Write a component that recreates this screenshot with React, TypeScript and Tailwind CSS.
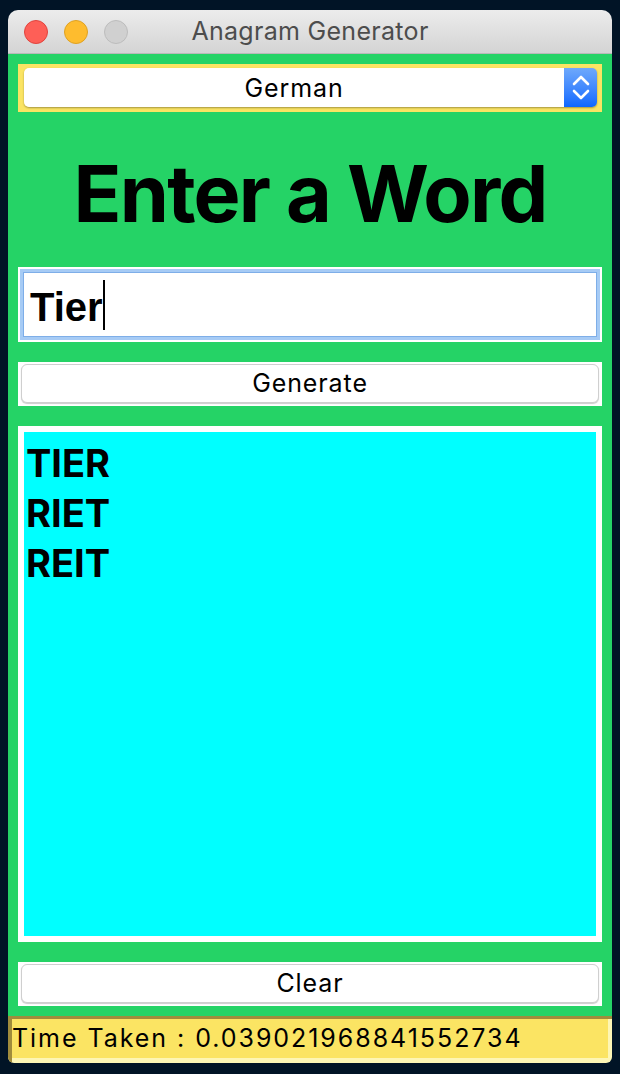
import { ReactNode } from 'react'

const sf = { fontFamily: 'Inter, "Noto Sans", sans-serif' }
const helv = { fontFamily: '"Liberation Sans", Arial, sans-serif' }

function MacButton({ label }: { label: string }) {
  return (
    <div className="h-[44px] bg-white px-[3px] pt-[2px] pb-[3px]">
      <div
        className="flex h-full items-center justify-center rounded-[6px] border border-[#cfcfcf] bg-white text-[25px] tracking-[0.9px] text-black shadow-[0_1px_1px_rgba(0,0,0,0.2)]"
        style={sf}
      >
        {label}
      </div>
    </div>
  )
}

function Light({ color, border }: { color: string; border: string }) {
  return <div className={`h-[24px] w-[24px] rounded-full border ${color} ${border}`} />
}

function Section({ children, className }: { children: ReactNode; className?: string }) {
  return <div className={className}>{children}</div>
}

export default function App() {
  const results = ['TIER', 'RIET', 'REIT']

  return (
    <div className="h-[1074px] w-[620px] bg-[#011426] px-[8px] pt-[10px]">
      <div className="flex h-[1053px] flex-col overflow-hidden rounded-t-[10px] rounded-b-[6px]">
        {/* title bar */}
        <div className="relative flex h-[44px] shrink-0 items-center border-b border-[#b9b9b9] bg-gradient-to-b from-[#ececec] to-[#d4d4d4] pl-[16px]">
          <div className="flex gap-[16px]">
            <Light color="bg-[#fe5f57]" border="border-[#e0443e]" />
            <Light color="bg-[#febc2e]" border="border-[#dea123]" />
            <Light color="bg-[#d0d0d0]" border="border-[#bcbcbc]" />
          </div>
          <div
            className="absolute inset-0 flex items-center justify-center text-[25px] tracking-[0.3px] text-[#4d4d4d]"
            style={sf}
          >
            Anagram Generator
          </div>
        </div>

        {/* body */}
        <div className="flex h-[962px] shrink-0 flex-col bg-[#25d366] px-[10px] pt-[10px]">
          {/* language select */}
          <div className="h-[48px] bg-[#fbe463] pt-[4px] pr-[5px] pb-[5px] pl-[6px]">
            <div className="flex h-full overflow-hidden rounded-[5px] shadow-[0_1px_2px_rgba(0,0,0,0.35)]">
              <div
                className="flex flex-1 items-center justify-center bg-white pt-[3px] text-[25px] tracking-[0.9px] text-black"
                style={sf}
              >
                German
              </div>
              <div className="flex w-[33px] flex-col items-center justify-center gap-[3px] bg-gradient-to-b from-[#6ea8fb] to-[#0b67ff]">
                <svg width="18" height="11" viewBox="0 0 18 11" fill="none">
                  <path d="M2 9 L9 2 L16 9" stroke="white" strokeWidth="2.6" strokeLinecap="round" strokeLinejoin="round" />
                </svg>
                <svg width="18" height="11" viewBox="0 0 18 11" fill="none">
                  <path d="M2 2 L9 9 L16 2" stroke="white" strokeWidth="2.6" strokeLinecap="round" strokeLinejoin="round" />
                </svg>
              </div>
            </div>
          </div>

          {/* heading */}
          <Section className="flex h-[155px] items-center justify-center pt-[7px]">
            <h1 className="text-[79px] leading-none font-bold tracking-[-1.8px] text-black" style={sf}>
              Enter a Word
            </h1>
          </Section>

          {/* entry */}
          <div className="h-[75px] bg-white p-[2px]">
            <div className="h-full border-[3px] border-[#a6cbf5]">
              <div className="flex h-full items-center border border-[#7eaee8] bg-white pl-[6px]">
                <span className="pt-[5px] text-[40px] leading-none font-bold text-black" style={helv}>
                  Tier
                </span>
                <span className="h-[50px] w-[2px] bg-black" />
              </div>
            </div>
          </div>

          <div className="h-[20px] shrink-0" />
          <MacButton label="Generate" />
          <div className="h-[20px] shrink-0" />

          {/* results */}
          <div className="h-[516px] shrink-0 bg-white p-[6px]">
            <div className="h-full bg-[#00ffff] pt-[6px] pl-[2px]">
              {results.map((w) => (
                <div key={w} className="h-[50px] text-[38px] leading-[50px] font-bold text-black" style={sf}>
                  {w}
                </div>
              ))}
            </div>
          </div>

          <div className="h-[20px] shrink-0" />
          <MacButton label="Clear" />
        </div>

        {/* status bar */}
        <div className="flex flex-1 flex-col border-t-[3px] border-l-[4px] border-[#a08c3c] bg-[#fdf6b5]">
          <div
            className="mr-[4px] flex h-[39px] items-center bg-[#fbe463] text-[25px] tracking-[1.95px] text-black"
            style={sf}
          >
            Time Taken : 0.039021968841552734
          </div>
        </div>
      </div>
    </div>
  )
}
